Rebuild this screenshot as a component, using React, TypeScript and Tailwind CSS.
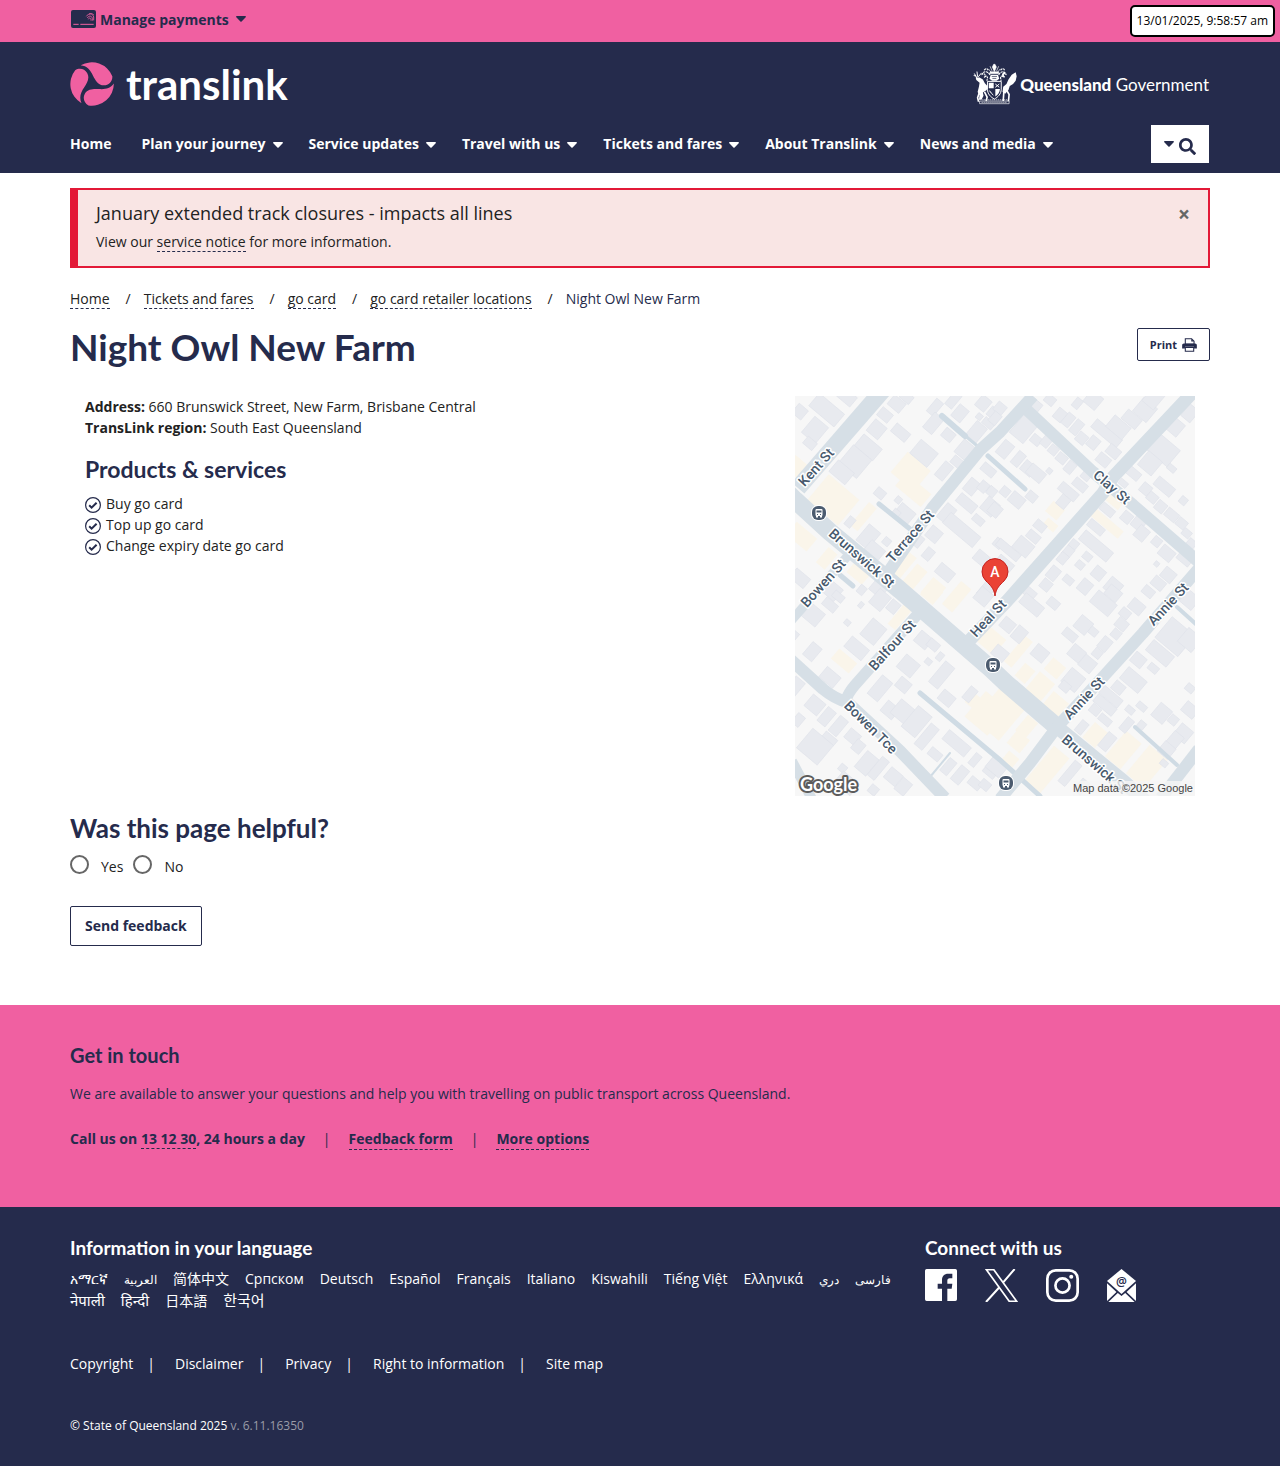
import React from "react";
import { FaSearch } from "react-icons/fa";

type Rect = [number, number, number, number];

const Caret = ({ className = "" }: { className?: string }) => (
  <svg viewBox="0 0 10 6" className={`h-[6px] w-[10px] shrink-0 ${className}`} fill="currentColor" aria-hidden="true">
    <path d="M.8 0h8.4c.7 0 1 .8.5 1.2L5.6 5.5a.8.8 0 0 1-1.2 0L.3 1.200C-.2.8.1 0 .8 0z" />
  </svg>
);

const CardIcon = () => (
  <svg viewBox="0 0 75 54" className="h-[18px] w-[25px]" aria-hidden="true">
    <rect x="0" y="0" width="75" height="54" rx="6" fill="#252b4c" />
    <g fill="none" stroke="#f060a1" strokeWidth="2.500">
      <path d="M7 43h16M28 43h40" strokeWidth="3" />
      <path d="M46 19c6-10 20-9 22 2v10M49 24c4-8 14-7 15 1v7M52 28c2-6 8-5 8 1v3M54 12c5-3 11-2 14 3" />
    </g>
  </svg>
);

const Swirl = () => {
  const blade = "M-34-56A66 66 0 0 1 61-23C62-8 50 4 36 4C18 4 10-12 3-25C-5-42-15-54-34-56Z";
  return (
    <svg viewBox="-66 -66 132 132" className="h-11 w-11 shrink-0" fill="#f060a1" aria-hidden="true">
      <path d={blade} />
      <path d={blade} transform="rotate(120)" />
      <path d={blade} transform="rotate(240)" />
    </svg>
  );
};

const CoatOfArms = () => (
  <svg viewBox="38 188 134 128" className="h-[42px] w-11 shrink-0" fill="#fff" aria-hidden="true">
    <path d="M46 232l12 0 10 6 6 12 8 8-2 12-12 8 2 10-6 12h-8l2-14-6-10 4-16 2-12-10-8z" />
    <path d="M50 234l-8-14m6 8l-8-2m12 4l-2-16m4 16l10-12" stroke="#fff" strokeWidth="3" fill="none" />
    <path d="M58 276l-6 18 3 12m18-30l8 16-3 12" stroke="#fff" strokeWidth="5" fill="none" />
    <path d="M168 216l3 12-3 14-8 10-10 6-4 12-10 12-8-6 2-16 10-8 6-14 10-14z" />
    <path d="M134 232c-8-6-6-14 2-14M140 270l8 14-2 20M132 276l-2 28" stroke="#fff" strokeWidth="5" fill="none" />
    <path d="M82 244h42v24c0 14-10 24-21 30-11-6-21-16-21-30z" fill="none" stroke="#fff" strokeWidth="3" />
    <path d="M86 248h15v17H86zM106 267h14c0 10-7 18-14 23z" />
    <path d="M106 252l12 10m0-10l-12 10M88 272c4 6 7 10 12 14" stroke="#fff" strokeWidth="3" />
    <path d="M92 224h22l4 12-8 6H96l-8-6z" />
    <path d="M95 229h16M97 235h12" stroke="#252b4c" strokeWidth="2" />
    <path d="M90 220h26v-5H90zM101 192h4l4 8-6 14-6-14zM90 198l6 14m20-14l-6 14M85 206l8 10m28-10l-8 10" stroke="#fff" strokeWidth="2" />
    <path d="M90 224c-8-12-20-12-24-2 8-4 10 2 8 8 8-6 10 2 6 12M116 224c8-12 18-12 22-2-8-4-10 2-8 8-8-6-10 2-6 12M72 210c4-6 10-6 12 0M122 210c4-6 10-6 12 0" fill="none" stroke="#fff" strokeWidth="3.500" strokeDasharray="7 2" />
    <path d="M58 304h90v8H58z" fill="none" stroke="#fff" strokeWidth="2" />
    <path d="M66 300h76M64 308h78" stroke="#fff" strokeWidth="2" strokeDasharray="4 2" />
  </svg>
);

const Printer = () => (
  <svg viewBox="0 0 42 40" className="h-[14px] w-[15px]" fill="#252b4c" aria-hidden="true">
    <path d="M9 2h18l7 7v9H9z" fill="#fff" stroke="#252b4c" strokeWidth="3" />
    <path d="M26 2v8h8z" />
    <path d="M5 16h32c3 0 5 2 5 5v9h-8v-5H8v5H0v-9c0-3 2-5 5-5z" />
    <path d="M9 27h24v11H9z" fill="#fff" stroke="#252b4c" strokeWidth="3" />
  </svg>
);

const Check = () => (
  <svg viewBox="0 0 16 16" className="mt-[2px] h-4 w-4 shrink-0" fill="none" stroke="#252b4c" aria-hidden="true">
    <circle cx="8" cy="8" r="7.400" strokeWidth="1.200" />
    <path d="M4.200 8.300l2.400 2.400 5-5" strokeWidth="2" />
  </svg>
);

/* Building footprints by map quadrant: centre x, centre y, width, depth (thirds of a map unit). */
const quadrants: { t: string; grey: Rect[]; cream: Rect[] }[] = [
  {
    t: "translate(-5 -6) scale(.3333)",
    grey: [[30,65,40,40],[110,60,110,55],[170,20,60,40],[75,120,60,70],[60,160,40,30],[235,172,80,50],[195,215,80,80],[155,247,70,50],[260,118,50,50],[285,75,45,35],[320,42,50,40],[350,22,40,30],[332,128,60,35],[402,190,75,60],[435,52,30,55],[430,100,40,65],[475,135,40,35],[490,30,30,55],[510,70,40,50],[560,125,45,60],[525,180,50,55],[500,215,35,30],[462,243,35,60],[580,40,40,45],[568,80,20,20],[595,100,40,25],[610,70,35,35],[595,240,50,30],[545,290,40,50],[580,290,30,35],[603,303,25,22],[530,340,70,35],[600,350,50,50],[470,370,40,60],[515,420,130,45],[565,390,40,25],[575,505,50,40],[625,460,30,30],[465,548,60,40],[270,310,35,30],[325,330,20,22],[345,370,60,45],[318,370,25,25],[180,396,25,35],[235,440,50,70],[255,480,60,40],[290,455,25,25],[380,450,40,40],[432,433,45,45],[415,492,30,40],[30,565,60,40],[125,600,60,50],[270,590,50,60],[215,600,25,30],[590,600,40,60]],
    cream: [[362,245,90,80],[370,300,100,50],[130,330,120,100],[220,380,30,90],[20,230,50,50],[35,440,80,50],[110,505,35,60],[340,530,30,90],[375,560,40,70],[430,600,50,60],[205,550,60,40]],
  },
  {
    t: "translate(195 -6) scale(.3333)",
    grey: [[100,118,60,75],[45,178,40,55],[138,150,35,30],[85,207,30,50],[115,235,45,40],[138,250,60,40],[168,155,30,35],[190,180,30,30],[178,243,18,18],[30,55,35,35],[15,85,30,40],[137,48,35,35],[180,30,35,30],[210,75,35,40],[235,90,30,45],[260,112,30,50],[262,40,25,35],[310,30,50,50],[275,145,35,35],[310,158,35,40],[350,130,110,35],[385,112,70,50],[425,88,60,40],[465,60,60,60],[490,25,50,60],[370,185,45,35],[340,210,45,35],[240,232,30,40],[215,205,35,30],[270,285,50,30],[235,305,70,32],[220,335,35,40],[290,255,30,35],[600,70,40,50],[555,110,50,50],[520,180,90,70],[480,220,60,60],[545,235,30,20],[430,250,50,30],[400,280,30,20],[523,290,70,35],[467,297,35,35],[487,323,35,30],[512,350,35,35],[545,375,45,32],[575,400,35,30],[590,430,30,25],[580,332,25,25],[605,460,30,25],[352,360,50,28],[410,382,35,35],[445,400,40,40],[455,430,40,45],[500,455,30,30],[530,490,50,40],[585,505,50,35],[500,522,16,16],[318,412,60,28],[318,468,120,40],[252,463,28,28],[235,485,30,35],[218,505,30,35],[292,500,30,25],[270,525,28,25],[190,550,35,45],[325,550,40,40],[168,585,35,35],[235,570,35,25],[285,590,40,45],[370,590,50,50],[120,610,40,30],[55,480,90,28],[100,470,60,50],[130,440,45,30],[150,408,40,30],[45,520,60,30],[80,330,50,40],[125,320,35,30],[45,305,30,30],[15,360,40,40],[5,305,30,30],[535,555,45,40],[505,580,45,35],[475,605,40,30]],
    cream: [[195,362,45,40],[182,405,40,25],[350,400,110,28],[370,330,60,30]],
  },
  {
    t: "translate(-5 194) scale(.3333)",
    grey: [[70,75,60,55],[120,45,50,30],[145,20,40,25],[172,98,20,18],[213,45,15,20],[270,30,50,60],[310,50,35,40],[250,125,60,70],[200,175,75,45],[67,185,40,55],[120,262,60,45],[15,290,40,60],[10,135,30,30],[355,228,60,55],[400,150,50,45],[430,165,40,30],[415,215,22,20],[450,200,20,28],[455,255,40,90],[270,295,45,80],[340,285,45,40],[300,360,50,45],[345,370,80,60],[380,395,60,90],[410,440,35,90],[435,493,45,30],[470,325,50,40],[540,313,30,50],[500,460,95,40],[475,530,30,55],[510,555,35,60],[555,510,25,45],[555,580,45,30],[585,585,35,30],[605,540,45,45],[75,345,55,50],[110,380,35,60],[145,408,35,65],[188,440,45,40],[120,445,50,22],[205,470,35,40],[75,470,90,85],[25,390,30,40],[230,520,50,70],[265,535,30,80],[310,560,50,45],[340,590,40,50],[158,535,25,25],[170,580,70,50],[580,20,50,50],[250,600,30,30]],
    cream: [[330,80,30,80],[162,213,70,40],[425,10,50,50],[500,20,40,90],[600,155,60,50],[590,370,90,100],[560,340,60,40]],
  },
  {
    t: "translate(195 194) scale(.3333)",
    grey: [[30,190,50,40],[53,105,45,40],[88,133,40,50],[125,45,80,40],[190,40,40,30],[150,190,50,45],[340,40,80,50],[370,10,50,40],[405,70,35,30],[440,50,50,40],[395,103,40,35],[378,132,30,30],[345,162,35,45],[322,190,30,30],[280,105,50,50],[240,135,50,30],[310,125,30,25],[260,190,50,45],[293,222,50,45],[250,270,60,60],[225,290,35,30],[510,190,90,45],[445,210,45,40],[490,235,35,25],[555,140,100,90],[600,150,60,60],[600,30,50,50],[385,293,40,35],[430,270,80,50],[363,320,80,32],[345,345,80,32],[315,360,35,30],[345,390,45,25],[275,412,28,45],[410,405,28,50],[420,360,30,22],[455,350,35,22],[352,455,35,60],[515,370,50,55],[550,390,30,30],[455,405,25,25],[580,430,50,50],[555,450,40,50],[530,480,45,45],[600,360,50,40],[600,295,30,25],[522,520,25,20],[240,550,30,90],[275,590,30,50],[20,530,60,50]],
    cream: [[10,150,60,50],[85,185,30,100],[195,235,50,45],[105,250,40,50],[150,290,60,70],[195,345,60,60],[30,370,100,130],[110,410,40,60],[85,455,50,50],[60,510,40,40],[170,540,60,140],[315,435,50,60],[400,480,60,100],[470,530,70,110]],
  },
];

const lanes: [string, number][] = [
  ["M147 20L170 40", 6],
  ["M168 38L186 53", 3],
  ["M193 60L230 93", 5],
  ["M84 108L120 137", 5],
  ["M45 179L58 190", 5],
  ["M125 297L205 364L245 400", 5],
  ["M155 357L135 381", 2],
  ["M340 331L382 369", 4],
  ["M382 211L402 229", 4],
];

const roads: [string, number][] = [
  ["M88-6L3 92", 17],
  ["M-6 98L0 104L35 136L105 194L195 272L212 288L262 331", 18],
  ["M262 331L328 385L350 405", 14],
  ["M92 178L138 111L185 54L205 36L238 0", 12],
  ["M399-5L318 81L308 97L212 205L172 247", 13],
  ["M232 14L298 76L338 109L406 168", 12],
  ["M406 170L348 237L308 281L262 331L235 367L205 403", 12],
  ["M404 353L366 402", 12],
  ["M57 155L-4 225", 9],
  ["M122 219L60 289Q53 297 50 306", 11],
  ["M-4 264L28 293Q40 303 52 306L105 355L150 402", 12],
  ["M-3 365L18 405", 10],
];

const labels: [string, number, number, number][] = [
  ["Kent St", 21, 71, -48],
  ["Clay St", 317, 91, 41],
  ["Terrace St", 115, 140, -49],
  ["Brunswick St", 67, 162, 41],
  ["Bowen St", 28, 187, -48],
  ["Heal St", 193, 222, -47],
  ["Balfour St", 97, 249, -48],
  ["Bowen Tce", 76, 331, 45],
  ["Annie St", 373, 208, -47],
  ["Annie St", 289, 302, -47],
  ["Brunswick St", 300, 368, 41],
];

const StreetMap = () => (
  <svg viewBox="0 0 400 400" className="block aspect-square w-[400px] max-w-full shrink-0" role="img" aria-label="Map of Night Owl New Farm">
    <rect width="400" height="400" fill="#f7f7f7" />
    {quadrants.map((q) => (
      <g key={q.t} transform={q.t}>
        {q.cream.map(([x, y, w, h]) => (
          <rect key={`${x},${y}`} x={-w / 2} y={-h / 2} width={w} height={h} fill="#faf5ea" transform={`translate(${x} ${y}) rotate(40)`} />
        ))}
        {q.grey.map(([x, y, w, h]) => (
          <rect key={`${x},${y}`} x={-w / 2} y={-h / 2} width={w} height={h} fill="#e8eaef" stroke="#dfe2e9" strokeWidth="2" transform={`translate(${x} ${y}) rotate(40) scale(.9)`} />
        ))}
      </g>
    ))}
    <g fill="none" strokeLinecap="round">
      {lanes.map(([d, w]) => <path key={d} d={d} stroke="#cfdbe4" strokeWidth={w} />)}
    </g>
    <g fill="none" strokeLinejoin="round">
      {roads.map(([d, w]) => <path key={d} d={d} stroke="#d6dfe6" strokeWidth={w} />)}
    </g>
    {[[24, 117], [198, 269], [211, 387]].map(([x, y]) => (
      <g key={x} transform={`translate(${x} ${y})`}>
        <rect x="-8" y="-8" width="16" height="16" rx="7" fill="#fff" />
        <rect x="-7" y="-7" width="14" height="14" rx="6" fill="#4b5b6f" />
        <rect x="-3.500" y="-4" width="7" height="7" rx="1" fill="#fff" />
        <path d="M-2.500-2.500h5v2h-5zM-2 1h1v1h-1zM1 1h1v1H1z" fill="#4b5b6f" />
        <path d="M-3 3h2v1.500h-2zM1 3h2v1.500H1z" fill="#fff" />
      </g>
    ))}
    <g fontFamily="Roboto, sans-serif" fontSize="14" fontWeight="500" fill="#47596d" stroke="#fff" strokeWidth="3" strokeLinejoin="round" paintOrder="stroke" textAnchor="middle">
      {labels.map(([name, x, y, a]) => (
        <text key={`${name}${x}`} transform={`translate(${x} ${y}) rotate(${a})`} y="5">{name}</text>
      ))}
    </g>
    <path d="M200 200c-1-8-5-11-9-15a13 13 0 1 1 18 0c-4 4-8 7-9 15z" fill="#ea4335" stroke="#c5221f" strokeWidth="1" />
    <text x="200" y="181" fontFamily="Roboto, sans-serif" fontSize="14" fontWeight="500" fill="#fff" textAnchor="middle">A</text>
    <text x="5" y="395" fontFamily="Lato, sans-serif" fontSize="18" fontWeight="700" fill="#fff" stroke="#5c5c5c" strokeWidth="4" strokeLinejoin="round" paintOrder="stroke">Google</text>
    <rect x="278" y="385" width="122" height="15" fill="#f5f5f5" fillOpacity=".8" />
    <text x="398" y="396" fontFamily="'Liberation Sans', sans-serif" fontSize="11" fill="#444" textAnchor="end">Map data ©2025 Google</text>
  </svg>
);

const Facebook = () => (
  <svg viewBox="0 0 96 96" className="h-8 w-8" fill="#fff" aria-hidden="true">
    <path d="M5 0h86a5 5 0 0 1 5 5v86a5 5 0 0 1-5 5H67V59h13l2-15H67v-9c0-4 2-7 7-7h8V14H70c-13 0-19 8-19 19v11H38v15h13v37H5a5 5 0 0 1-5-5V5a5 5 0 0 1 5-5z" />
  </svg>
);

const XLogo = () => (
  <svg viewBox="0 0 98 98" className="h-[33px] w-[33px]" aria-hidden="true">
    <path d="M88 0L54 40M42 55L3 98" stroke="#fff" strokeWidth="6" />
    <path d="M4 2h22l68 94H72z" fill="#252b4c" stroke="#fff" strokeWidth="5" />
  </svg>
);

const Instagram = () => (
  <svg viewBox="0 0 98 98" className="h-[33px] w-[33px]" fill="none" stroke="#fff" aria-hidden="true">
    <rect x="4" y="4" width="90" height="90" rx="25" strokeWidth="8" />
    <circle cx="49" cy="49" r="21" strokeWidth="8" />
    <circle cx="75" cy="23" r="6" fill="#fff" stroke="none" />
  </svg>
);

const Mail = () => (
  <svg viewBox="0 0 86 98" className="h-[33px] w-[29px]" fill="#fff" aria-hidden="true">
    <path d="M43 0l43 36-43 38L0 36z" />
    <path d="M0 42l28 26L0 95zM86 42L58 68l28 27zM32 71l11 9 11-9 28 27H4z" />
    <text x="43" y="49" fontFamily="'Open Sans', sans-serif" fontSize="36" fontWeight="600" fill="#252b4c" textAnchor="middle">@</text>
  </svg>
);

const nav = ["Home", "Plan your journey", "Service updates", "Travel with us", "Tickets and fares", "About Translink", "News and media"];
const languages: [string, string][] = [
  ["አማርኛ", ""], ["العربية", "text-[12px]"], ["简体中文", ""], ["Српском", ""], ["Deutsch", ""], ["Español", ""],
  ["Français", ""], ["Italiano", ""], ["Kiswahili", ""], ["Tiếng Việt", ""], ["Ελληνικά", ""], ["دري", "text-[12px]"],
  ["فارسی", "text-[12px]"], ["नेपाली", "text-[15px]"], ["हिन्दी", "text-[15px]"], ["日本語", ""], ["한국어", "text-[15px]"],
];
const crumbs = ["Home", "Tickets and fares", "go card", "go card retailer locations"];
const legal = ["Copyright", "Disclaimer", "Privacy", "Right to information", "Site map"];
const wrap = "mx-auto w-full max-w-[1170px] px-[15px]";
const dashed = "border-b border-dashed border-[#252b4c]";
const heading = "font-['Lato'] text-[#252b4c]";

export default function App() {
  return (
    <div className="bg-white font-['Open_Sans','Noto_Sans','Noto_Sans_CJK_SC',sans-serif] text-[14px] leading-[21px] text-[#222]">
      <div className="relative bg-[#f060a1] text-[#252b4c]">
        <div className={wrap}>
          <button className="flex h-[42px] items-center pb-1 pl-px font-bold">
            <CardIcon />
            <span className="ml-1">Manage payments</span>
            <Caret className="ml-[7px]" />
          </button>
        </div>
        <div className="absolute top-[5px] right-[5px] flex h-8 items-center rounded-[5px] border-2 border-black bg-white px-[5px] pb-px text-[12px] text-black">13/01/2025, 9:58:57 am</div>
      </div>

      <header className="bg-[#252b4c] text-white">
        <div className={wrap}>
          <div className="flex items-center justify-between pt-5">
            <a href="#" className="flex items-center gap-3">
              <Swirl />
              <span className="font-['Lato'] text-[42px] leading-[44px] font-bold">translink</span>
            </a>
            <a href="#" className="flex items-center gap-[3px] font-['Lato'] text-[17px]">
              <CoatOfArms />
              <span className="pt-px pr-px"><b className="font-black">Queensland</b> Government</span>
            </a>
          </div>
          <nav className="flex items-start justify-between pt-[19px] pb-[10px]">
            <ul className="flex gap-[26px] pt-2 font-bold">
              {nav.map((n, i) => (
                <li key={n}>
                  <a href="#" className={i ? "flex items-center whitespace-nowrap" : "mr-1"}>
                    {n}
                    {i > 0 && <Caret className="mt-[2px] ml-[7px]" />}
                  </a>
                </li>
              ))}
            </ul>
            <button aria-label="Search" className="mr-px flex h-[38px] w-[58px] items-center justify-center gap-[5px] bg-white text-[#252b4c]">
              <Caret className="w-2" />
              <FaSearch className="mt-1 text-[17px]" />
            </button>
          </nav>
        </div>
      </header>

      <main className={wrap}>
        <section className="mt-[15px] flex justify-between border-2 border-l-8 border-[#e31937] bg-[#f9e5e4] pt-3 pr-[18px] pb-[14px] pl-[18px]">
          <div>
            <h2 className="text-[18px] leading-[23px]">January extended track closures - impacts all lines</h2>
            <p className="mt-[6px]">View our <a href="#" className={dashed}>service notice</a> for more information.</p>
          </div>
          <button aria-label="Close" className="self-start text-[21px] leading-[24px] font-bold text-[#666]">×</button>
        </section>

        <ol className="mt-5 flex">
          {crumbs.map((c) => (
            <li key={c}><a href="#" className={dashed}>{c}</a><span className="pr-[13px] pl-4">/</span></li>
          ))}
          <li className="text-[#252b4c]">Night Owl New Farm</li>
        </ol>

        <div className="mt-[19px] flex items-start justify-between">
          <h1 className={`${heading} text-[37px] leading-[38px] font-bold`}>Night Owl New Farm</h1>
          <button className="flex h-[33px] items-center gap-[5px] rounded-[2px] border border-[#252b4c] px-3 text-[11px] font-bold text-[#252b4c]">
            Print <Printer />
          </button>
        </div>

        <div className="mt-[30px] flex justify-between gap-8 px-[15px]">
          <div>
            <p><b>Address:</b> 660 Brunswick Street, New Farm, Brisbane Central</p>
            <p><b>TransLink region:</b> South East Queensland</p>
            <h2 className={`${heading} mt-[17px] text-[23px] leading-[28px] font-bold`}>Products &amp; services</h2>
            <ul className="mt-[10px]">
              {["Buy go card", "Top up go card", "Change expiry date go card"].map((t) => (
                <li key={t} className="flex items-center gap-[5px]"><Check />{t}</li>
              ))}
            </ul>
          </div>
          <StreetMap />
        </div>

        <form className="mt-[17px] pb-[59px]">
          <h2 className={`${heading} text-[26px] leading-[30px] font-bold`}>Was this page helpful?</h2>
          <div className="mt-3 flex gap-[10px]">
            {["Yes", "No"].map((o) => (
              <label key={o} className="flex items-start gap-3">
                <input type="radio" name="helpful" className="h-[19px] w-[19px] appearance-none rounded-full border-2 border-[#666] bg-white" />
                <span className="mt-px">{o}</span>
              </label>
            ))}
          </div>
          <button type="button" className="mt-[29px] h-10 rounded-[2px] border border-[#252b4c] px-[14px] pb-[2px] font-bold text-[#252b4c]">Send feedback</button>
        </form>
      </main>

      <section className="bg-[#f060a1] pt-[37px] pb-[57px] text-[#252b4c]">
        <div className={wrap}>
          <h2 className={`${heading} text-[20px] leading-[26px] font-bold`}>Get in touch</h2>
          <p className="mt-[15px]">We are available to answer your questions and help you with travelling on public transport across Queensland.</p>
          <p className="mt-6 flex font-bold">
            <span>Call us on <a href="#" className={dashed}>13 12 30</a>, 24 hours a day</span>
            <span className="px-[18px] font-normal">|</span>
            <a href="#" className={dashed}>Feedback form</a>
            <span className="px-[18px] font-normal">|</span>
            <a href="#" className={dashed}>More options</a>
          </p>
        </div>
      </section>

      <footer className="bg-[#252b4c] pt-[29px] pb-[31px] text-white">
        <div className={wrap}>
          <div className="grid grid-cols-4">
            <div className="col-span-3 pr-[30px]">
              <h2 className="font-['Lato'] text-[19px] leading-[24px] font-bold">Information in your language</h2>
              <ul className="mt-2 flex flex-wrap gap-x-4">
                {languages.map(([l, size]) => <li key={l}><a href="#" className={size}>{l}</a></li>)}
              </ul>
            </div>
            <div>
              <h2 className="font-['Lato'] text-[19px] leading-[24px] font-bold">Connect with us</h2>
              <div className="mt-[9px] flex gap-[28px]">
                <a href="#" aria-label="Facebook"><Facebook /></a>
                <a href="#" aria-label="X"><XLogo /></a>
                <a href="#" aria-label="Instagram"><Instagram /></a>
                <a href="#" aria-label="Email"><Mail /></a>
              </div>
            </div>
          </div>
          <ul className="mt-[42px] flex">
            {legal.map((l, i) => (
              <li key={l}><a href="#">{l}</a>{i < legal.length - 1 && <span className="pr-5 pl-[14px]">|</span>}</li>
            ))}
          </ul>
          <p className="mt-[41px] text-[12px]">© State of Queensland 2025 <span className="text-[#9a9ca8]">v. 6.11.16350</span></p>
        </div>
      </footer>
    </div>
  );
}
